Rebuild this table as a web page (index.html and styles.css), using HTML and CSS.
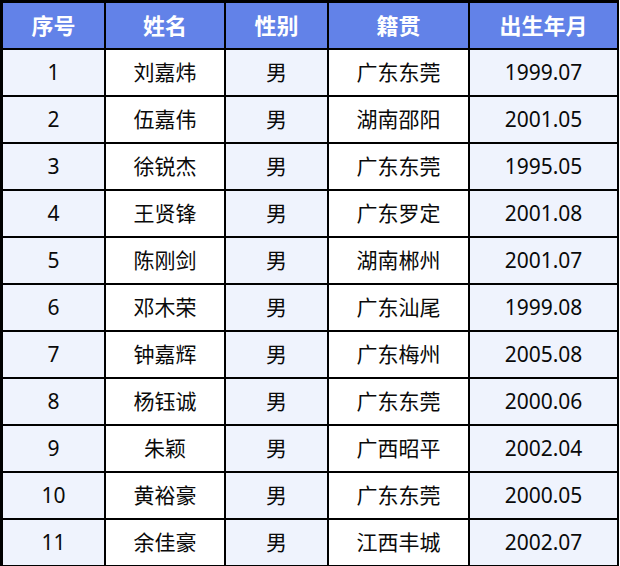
FILE: index.html
```html
<!DOCTYPE html>
<html lang="zh-CN">
<head>
<meta charset="utf-8">
<title>名单</title>
<link rel="stylesheet" href="styles.css">
</head>
<body>
<table class="roster">
  <colgroup>
    <col class="c-no">
    <col class="c-name">
    <col class="c-sex">
    <col class="c-home">
    <col class="c-birth">
  </colgroup>
  <thead>
    <tr><th>序号</th><th>姓名</th><th>性别</th><th>籍贯</th><th>出生年月</th></tr>
  </thead>
  <tbody>
    <tr><td>1</td><td>刘嘉炜</td><td>男</td><td>广东东莞</td><td>1999.07</td></tr>
    <tr><td>2</td><td>伍嘉伟</td><td>男</td><td>湖南邵阳</td><td>2001.05</td></tr>
    <tr><td>3</td><td>徐锐杰</td><td>男</td><td>广东东莞</td><td>1995.05</td></tr>
    <tr><td>4</td><td>王贤锋</td><td>男</td><td>广东罗定</td><td>2001.08</td></tr>
    <tr><td>5</td><td>陈刚剑</td><td>男</td><td>湖南郴州</td><td>2001.07</td></tr>
    <tr><td>6</td><td>邓木荣</td><td>男</td><td>广东汕尾</td><td>1999.08</td></tr>
    <tr><td>7</td><td>钟嘉辉</td><td>男</td><td>广东梅州</td><td>2005.08</td></tr>
    <tr><td>8</td><td>杨钰诚</td><td>男</td><td>广东东莞</td><td>2000.06</td></tr>
    <tr><td>9</td><td>朱颖</td><td>男</td><td>广西昭平</td><td>2002.04</td></tr>
    <tr><td>10</td><td>黄裕豪</td><td>男</td><td>广东东莞</td><td>2000.05</td></tr>
    <tr><td>11</td><td>余佳豪</td><td>男</td><td>江西丰城</td><td>2002.07</td></tr>
  </tbody>
</table>
</body>
</html>
```
FILE: styles.css
```css
html, body {
  margin: 0;
  padding: 0;
  background: #ffffff;
}

.roster {
  table-layout: fixed;
  width: 619px;
  border-collapse: separate;
  border-spacing: 2px;
  background: #000000;
  border-top: 1px solid #000000;
  border-left: 1px solid #000000;
  font-family: "Noto Sans", "Noto Sans CJK SC", sans-serif;
}

.c-no { width: 101px; }
.c-name { width: 118px; }
.c-sex { width: 101px; }
.c-home { width: 139px; }
.c-birth { width: 147px; }

.roster th,
.roster td {
  padding: 0 0 1px;
  text-align: center;
  vertical-align: middle;
  height: 44px;
  line-height: 1;
}

.roster th {
  background: #6282e8;
  color: #ffffff;
  font-size: 22px;
  font-weight: 700;
}

.roster td {
  font-size: 21px;
  color: #0a0a0a;
  background: #ffffff;
}

.roster td:nth-child(odd) {
  background: #eff3fd;
}
```
